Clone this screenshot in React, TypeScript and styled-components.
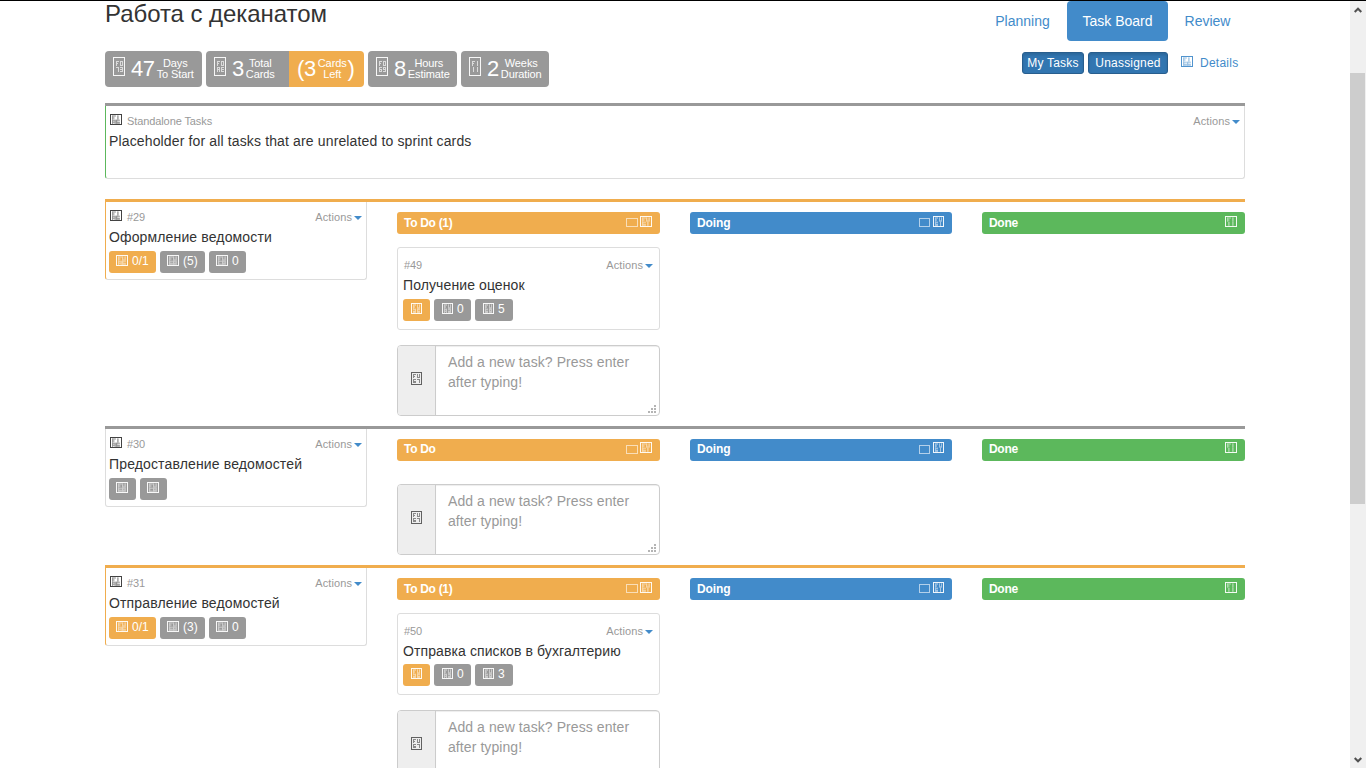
import React from "react";
import styled, { createGlobalStyle } from "styled-components";

const GlobalStyle = createGlobalStyle`
  * { box-sizing: border-box; }
  body {
    margin: 0;
    overflow: hidden;
    background: #fff;
    color: #333;
    font: 14px/20px "Liberation Sans", Arial, sans-serif;
  }
`;

const tones = { gray: "#999", orange: "#f0ad4e", blue: "#428bca", green: "#5cb85c" };
type Tone = keyof typeof tones;

const Window = styled.div`
  display: flex;
  height: 768px;
  overflow: hidden;
  border-top: 1px solid #000;
`;
const Page = styled.main`
  flex: 1;
  padding: 0 105px;
  min-width: 0;
`;
const Header = styled.header`
  display: flex;
  justify-content: space-between;
  height: 50px;
`;
const Title = styled.h1`
  margin: 0;
  font-size: 24px;
  font-weight: 400;
  line-height: 26px;
  letter-spacing: -0.05px;
`;
const Nav = styled.nav`
  display: flex;
  gap: 2px;
`;
const NavPill = styled.a<{ $active?: boolean; $width: number }>`
  width: ${(p) => p.$width}px;
  height: 40px;
  line-height: 40px;
  text-align: center;
  border-radius: 4px;
  color: ${(p) => (p.$active ? "#fff" : tones.blue)};
  background: ${(p) => (p.$active ? tones.blue : "transparent")};
`;
const Toolbar = styled.div`
  display: flex;
  justify-content: space-between;
  height: 52px;
`;
const Stats = styled.div`
  display: flex;
  gap: 4px;
`;
const StatGroup = styled.div`
  display: flex;
  height: 36px;
  border-radius: 4px;
  overflow: hidden;
`;
const Stat = styled.div<{ $tone?: Tone; $width: number }>`
  display: flex;
  width: ${(p) => p.$width}px;
  padding-left: 8px;
  color: #fff;
  background: ${(p) => tones[p.$tone ?? "gray"]};
  > svg { margin: 6px 6px 0 0; }
`;
const StatNumber = styled.span`
  font-size: 22px;
  line-height: 36px;
  letter-spacing: -0.4px;
`;
const StatLabel = styled.span`
  margin: 7px 1px 0 2px;
  font-size: 11px;
  line-height: 11px;
  letter-spacing: -0.1px;
  text-align: center;
  white-space: nowrap;
`;
const Filters = styled.div`
  display: flex;
  gap: 4px;
  padding-top: 1px;
`;
const FilterButton = styled.button<{ $width: number }>`
  width: ${(p) => p.$width}px;
  height: 22px;
  padding: 0;
  border: 1px solid #285e8e;
  border-radius: 3px;
  background: #3276b1;
  box-shadow: inset 0 2px 3px rgba(0, 0, 0, 0.13);
  color: #fff;
  font: 12px/18px "Liberation Sans", Arial, sans-serif;
  letter-spacing: 0.2px;
`;
const DetailsLink = styled.a`
  display: flex;
  width: 73px;
  padding-left: 9px;
  color: ${tones.blue};
  font-size: 12px;
  line-height: 22px;
  letter-spacing: 0.25px;
  > svg { margin: 4px 7px 0 0; }
`;

const Card = styled.article<{ $edge?: string; $tall?: boolean }>`
  height: ${(p) => (p.$tall ? 73 : 78)}px;
  padding: 8px 4px 0 3px;
  border: 1px solid #ddd;
  border-top: 0;
  border-left-color: ${(p) => p.$edge ?? "#ddd"};
  border-radius: 0 0 3px 3px;
  background: #fff;
`;
const CardMeta = styled.div`
  display: flex;
  height: 17px;
  color: #999;
  font-size: 11px;
  line-height: 14px;
  letter-spacing: -0.1px;
  > svg { margin: 0 5px 0 1px; }
`;
const TaskMeta = styled(CardMeta)`
  padding: 3px 0 0 1px;
  height: 20px;
`;
const Actions = styled.span`
  display: flex;
  gap: 2px;
  margin-left: auto;
  letter-spacing: 0.1px;
  &::after {
    content: "";
    margin-top: 6px;
    border: 4px solid transparent;
    border-top-color: ${tones.blue};
    border-bottom: 0;
    height: 4px;
  }
`;
const CardTitle = styled.div`
  line-height: 20px;
  letter-spacing: 0.14px;
  white-space: nowrap;
`;
const Badges = styled.div`
  display: flex;
  gap: 4px;
  margin-top: 4px;
`;
const Badge = styled.span<{ $tone: Tone; $width: number }>`
  display: flex;
  gap: 4px;
  width: ${(p) => p.$width}px;
  height: 22px;
  padding-left: 7px;
  border-radius: 3px;
  background: ${(p) => tones[p.$tone]};
  color: #fff;
  font-size: 12px;
  line-height: 21px;
  > svg { margin-top: 4px; }
`;
const TaskCard = styled(Card)<{ $compact: boolean }>`
  height: ${(p) => (p.$compact ? 82 : 83)}px;
  margin-top: 13px;
  padding: 7px 6px 0 5px;
  border-top: 1px solid #ddd;
  border-radius: 3px;
  ${CardTitle} { letter-spacing: 0.1px; }
  ${Badges} { margin-top: ${(p) => (p.$compact ? 3 : 4)}px; }
  ${Badge} { padding-left: 8px; }
`;

const Standalone = styled.section`
  height: 96px;
  border-top: 3px solid #999;
`;
const Swimlane = styled.section<{ $tone: Tone }>`
  display: grid;
  grid-template-columns: 262px 263px 262px 263px;
  gap: 30px;
  align-items: start;
  padding-bottom: 10px;
  border-top: 3px solid ${(p) => tones[p.$tone]};
`;
const Lane = styled.div`
  padding-top: 10px;
`;
const LaneHeader = styled.div<{ $tone: Tone; $raised: boolean }>`
  display: flex;
  gap: ${(p) => (p.$tone === "blue" ? 3 : 2)}px;
  height: 22px;
  padding: 0 8px 0 7px;
  border-radius: 3px;
  background: ${(p) => tones[p.$tone]};
  color: #fff;
  font-size: 12px;
  font-weight: 700;
  line-height: ${(p) => (p.$raised ? 20 : 22)}px;
  letter-spacing: ${(p) => (p.$tone === "blue" ? -0.1 : -0.3)}px;
  > svg { margin-top: ${(p) => (p.$raised ? 3 : 4)}px; }
`;
const LaneName = styled.span`
  flex: 1;
`;
const EmptySquare = styled.i<{ $width: number }>`
  width: ${(p) => p.$width}px;
  height: 9px;
  margin-top: 6px;
  border: 1px solid rgba(255, 255, 255, 0.6);
`;
const NewTask = styled.div<{ $gap: number }>`
  display: flex;
  height: 71px;
  margin-top: ${(p) => p.$gap}px;
  border: 1px solid #ccc;
  border-radius: 4px;
  overflow: hidden;
`;
const Addon = styled.span`
  display: grid;
  place-items: center;
  width: 38px;
  background: #eee;
  border-right: 1px solid #ccc;
  > svg { margin-bottom: 4px; }
`;
const Field = styled.div`
  display: flex;
  flex: 1;
  padding: 6px 3px 2px 12px;
  color: #999;
  letter-spacing: 0.08px;
  box-shadow: inset 0 1px 1px rgba(0, 0, 0, 0.075);
  > span { flex: 1; white-space: nowrap; }
  > svg { align-self: flex-end; }
`;

const Scrollbar = styled.aside`
  display: flex;
  flex-direction: column;
  align-items: center;
  justify-content: space-between;
  width: 16px;
  padding: 6px 1px 5px 0;
  background: #f0f0f0;
`;
const Thumb = styled.div`
  width: 15px;
  height: 431px;
  margin: 60px 0 auto;
  background: #cdcdcd;
`;

/* 3x5 bitmaps for the marks inside an icon frame, one string per row */
const marks: Record<string, string[]> = {
  "0": ["111", "101", "101", "101", "111"],
  "1": ["010", "010", "010", "010", "010"],
  "2": ["111", "001", "111", "100", "111"],
  "3": ["111", "001", "111", "001", "111"],
  "5": ["111", "100", "111", "001", "111"],
  "6": ["111", "100", "111", "101", "111"],
  "7": ["111", "001", "001", "001", "001"],
  "9": ["111", "101", "111", "001", "111"],
  A: ["111", "101", "111", "101", "101"],
  C: ["111", "100", "100", "100", "111"],
  E: ["111", "100", "111", "100", "111"],
  F: ["111", "100", "110", "100", "100"],
};
const shortMarks: Record<string, string[]> = {
  "0": ["101", "101", "101", "111"],
  "6": ["111", "100", "111", "111"],
};

function CodeIcon({ code, w = 12, h = 11, color = "#fff" }: { code: string; w?: number; h?: number; color?: string }) {
  const tall = h > 15;
  const xs = tall ? [3, 7] : [2, 6];
  const ys = tall ? [4, 10] : h === 13 ? [2, 7] : [1.5, 5.7];
  const step = !tall && w === 12 ? 1.25 : 1;
  return (
    <svg width={w} height={h} viewBox={`0 0 ${w} ${h}`} fill={color}>
      <rect x=".5" y=".5" width={w - 1} height={h - 1} fill="none" stroke={color} strokeOpacity=".92" />
      <g opacity=".65">
        {code.split("").map((c, i) =>
          (tall ? marks[c] : shortMarks[c] ?? marks[c].filter((_, r) => r !== 3)).map((row, r) =>
            row.split("").map((bit, k) =>
              bit === "1" ? (
                <rect key={`${i}-${r}-${k}`} x={xs[i % 2] + k * step} y={ys[Math.floor(i / 2)] + r} width={step} height="1" />
              ) : null,
            ),
          ),
        )}
      </g>
    </svg>
  );
}

const Grip = () => (
  <svg width="8" height="8" viewBox="0 0 8 8" fill="#b4b4b4">
    <path d="M6 0h2v2H6zM3 3h2v2H3zM6 3h2v2H6zM0 6h2v2H0zM3 6h2v2H3zM6 6h2v2H6z" />
  </svg>
);
const Arrow = ({ down }: { down?: boolean }) => (
  <svg width="8" height="6" viewBox="0 0 8 6" fill="none" stroke="#505050" strokeWidth="2">
    <path d={down ? "M.7 1L4 4.3 7.3 1" : "M.7 5L4 1.7 7.3 5"} />
  </svg>
);

type BadgeData = { tone: Tone; width: number; code: string; text?: string };
const BadgeRow = ({ items, iconWidth }: { items: BadgeData[]; iconWidth?: number }) => (
  <Badges>
    {items.map((b, i) => (
      <Badge key={i} $tone={b.tone} $width={b.width}>
        <CodeIcon code={b.code} w={iconWidth} />
        {b.text}
      </Badge>
    ))}
  </Badges>
);

type StoryData = {
  id: number;
  tone: Tone;
  title: string;
  badges: BadgeData[];
  task?: { id: number; title: string; estimate: string; compact: boolean };
};

const storyBadges = (points: string): BadgeData[] => [
  { tone: "orange", width: 47, code: "F0AE", text: "0/1" },
  { tone: "gray", width: 45, code: "F069", text: points },
  { tone: "gray", width: 37, code: "F0C9", text: "0" },
];

const stories: StoryData[] = [
  { id: 29, tone: "orange", title: "Оформление ведомости", badges: storyBadges("(5)"), task: { id: 49, title: "Получение оценок", estimate: "5", compact: false } },
  {
    id: 30,
    tone: "gray",
    title: "Предоставление ведомостей",
    badges: [
      { tone: "gray", width: 27, code: "F069" },
      { tone: "gray", width: 27, code: "F0C9" },
    ],
  },
  { id: 31, tone: "orange", title: "Отправление ведомостей", badges: storyBadges("(3)"), task: { id: 50, title: "Отправка списков в бухгалтерию", estimate: "3", compact: true } },
];

function Story({ story }: { story: StoryData }) {
  const { task } = story;
  const raised = !task;
  return (
    <Swimlane $tone={story.tone}>
      <Card $edge={story.tone === "orange" ? tones.orange : undefined}>
        <CardMeta>
          <CodeIcon code="F1A5" color="#333" />#{story.id}
          <Actions>Actions</Actions>
        </CardMeta>
        <CardTitle>{story.title}</CardTitle>
        <BadgeRow items={story.badges} />
      </Card>
      <Lane>
        <LaneHeader $tone="orange" $raised={raised}>
          <LaneName>To Do{task && " (1)"}</LaneName>
          <EmptySquare $width={12} />
          <CodeIcon code="F061" />
        </LaneHeader>
        {task && (
          <TaskCard $compact={task.compact}>
            <TaskMeta>
              #{task.id}
              <Actions>Actions</Actions>
            </TaskMeta>
            <CardTitle>{task.title}</CardTitle>
            <BadgeRow
              iconWidth={11}
              items={[
                { tone: "orange", width: 27, code: "F026" },
                { tone: "gray", width: 37, code: "F0A2", text: "0" },
                { tone: "gray", width: 38, code: "F069", text: task.estimate },
              ]}
            />
          </TaskCard>
        )}
        <NewTask $gap={task ? 15 : 23}>
          <Addon>
            <CodeIcon code="F067" w={11} h={13} color="#555" />
          </Addon>
          <Field>
            <span>
              Add a new task? Press enter
              <br />
              after typing!
            </span>
            <Grip />
          </Field>
        </NewTask>
      </Lane>
      <Lane>
        <LaneHeader $tone="blue" $raised={raised}>
          <LaneName>Doing</LaneName>
          <EmptySquare $width={11} />
          <CodeIcon code="F061" w={11} />
        </LaneHeader>
      </Lane>
      <Lane>
        <LaneHeader $tone="green" $raised={raised}>
          <LaneName>Done</LaneName>
          <CodeIcon code="F111" />
        </LaneHeader>
      </Lane>
    </Swimlane>
  );
}

const StatItem = ({ code, value, top, bottom, width }: { code: string; value: string; top: string; bottom: string; width: number }) => (
  <Stat $width={width}>
    <CodeIcon code={code} h={19} />
    <StatNumber>{value}</StatNumber>
    <StatLabel>
      {top}
      <br />
      {bottom}
    </StatLabel>
  </Stat>
);

export default function App() {
  return (
    <Window>
      <GlobalStyle />
      <Page>
        <Header>
          <Title>Работа с деканатом</Title>
          <Nav>
            <NavPill $width={85}>Planning</NavPill>
            <NavPill $width={101} $active>Task Board</NavPill>
            <NavPill $width={75}>Review</NavPill>
          </Nav>
        </Header>
        <Toolbar>
          <Stats>
            <StatGroup>
              <StatItem code="F073" value="47" top="Days" bottom="To Start" width={97} />
            </StatGroup>
            <StatGroup>
              <StatItem code="F0AE" value="3" top="Total" bottom="Cards" width={83} />
              <Stat $tone="orange" $width={75}>
                <StatNumber>(3</StatNumber>
                <StatLabel>
                  Cards
                  <br />
                  Left
                </StatLabel>
                <StatNumber>)</StatNumber>
              </Stat>
            </StatGroup>
            <StatGroup>
              <StatItem code="F069" value="8" top="Hours" bottom="Estimate" width={89} />
            </StatGroup>
            <StatGroup>
              <StatItem code="F111" value="2" top="Weeks" bottom="Duration" width={88} />
            </StatGroup>
          </Stats>
          <Filters>
            <FilterButton $width={62}>My Tasks</FilterButton>
            <FilterButton $width={80}>Unassigned</FilterButton>
            <DetailsLink>
              <CodeIcon code="F1E5" color={tones.blue} />
              Details
            </DetailsLink>
          </Filters>
        </Toolbar>
        <Standalone>
          <Card $edge={tones.green} $tall>
            <CardMeta>
              <CodeIcon code="F1AE" color="#333" />
              Standalone Tasks
              <Actions>Actions</Actions>
            </CardMeta>
            <CardTitle>Placeholder for all tasks that are unrelated to sprint cards</CardTitle>
          </Card>
        </Standalone>
        {stories.map((s) => (
          <Story key={s.id} story={s} />
        ))}
      </Page>
      <Scrollbar>
        <Arrow />
        <Thumb />
        <Arrow down />
      </Scrollbar>
    </Window>
  );
}
